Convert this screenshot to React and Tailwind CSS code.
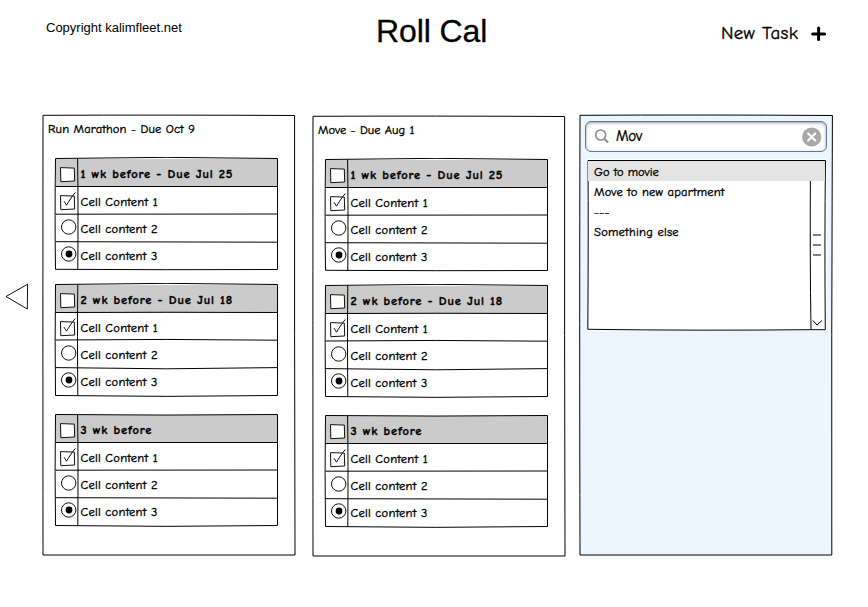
import React from "react";

const comic = "font-['Comic_Sans_MS','Comic_Neue',Inter,sans-serif] whitespace-nowrap [-webkit-text-stroke:0.35px_#000]";

function Frame({ w, h, d, fill = "none" }) {
  return (
    <svg className="pointer-events-none absolute left-0 top-0" width={w} height={h} fill={fill} stroke="#000" strokeWidth="1">
      <path d={d} />
    </svg>
  );
}

function Box({ checked }) {
  return (
    <svg width="21" height="27" fill="none" stroke="#111" strokeWidth="1">
      <path d="M4.5 8.6 18.3 9.1 18.7 22 4.8 22.7Z" fill="#fff" />
      {checked && <path d="M8 14.2c1 1 1.7 3 2.5 4C12.5 15 16 9 19.4 5.4" />}
    </svg>
  );
}

function Radio({ on }) {
  return (
    <svg width="21" height="27" fill="none" stroke="#111" strokeWidth="1">
      <ellipse cx="12.7" cy="13" rx="7.2" ry="7.2" />
      {on && <circle cx="13" cy="13" r="3.4" fill="#000" stroke="none" />}
    </svg>
  );
}

const FRAMES = [
  "M1.5 1.5Q112 -.8 223.5 1.5V112.5Q112 113 1.5 112.3Q.7 60 1.5 1.5M1.5 29.5H223.5M1.5 57.2L223.5 57M1.5 84.7L223.5 85.2M23.6 1.5Q24.3 50 23.8 112.5",
  "M1.5 1.5Q112 -.8 223.5 1.5V112.5Q112 114.2 1.5 112.5Q.8 60 1.5 1.5M1.5 29.5Q112 29 223.5 29.5M1.5 57Q112 55.8 223.5 57.2M1.5 84.6Q112 87 223.5 84.6M23.8 1.5Q23.2 50 23.8 112.5",
  "M1.5 1.5Q112 2.6 223.5 1.5V112.5Q112 114.2 1.5 112.5Q.7 60 1.5 1.5M1.5 29.5H223.5M1.5 57.2L223.5 57M1.5 84.7L223.5 85.2M23.6 1.5Q24.3 50 23.8 112.5",
];

function Table({ title, frame }) {
  const cell = `${comic} pl-[3.5px] text-[12.5px] leading-[27px]`;
  return (
    <section className="relative h-[114px] w-[225px] pl-[2px] pt-[2px]">
      <div className="flex h-[28px] w-[221px] bg-[#cbcbcb]">
        <Box />
        <span className={`${cell} pt-[1.5px] font-bold tracking-[0.83px]`}>{title}</span>
      </div>
      <div className="flex h-[27px]">
        <Box checked />
        <span className={`${cell} pt-[1.5px] tracking-[0.25px]`}>Cell Content 1</span>
      </div>
      <div className="flex h-[27px]">
        <Radio />
        <span className={`${cell} pt-[1.5px] tracking-[0.25px]`}>Cell content 2</span>
      </div>
      <div className="flex h-[27px]">
        <Radio on />
        <span className={`${cell} pt-[1.5px] tracking-[0.25px]`}>Cell content 3</span>
      </div>
      <Frame w="225" h="115" d={FRAMES[frame]} />
    </section>
  );
}

function Card({ title, track }) {
  return (
    <article className="relative h-[443px] w-[254px] pl-[12px]">
      <Frame w="254" h="443" d="M1 1.3Q120 .8 252.6 1.5Q252.4 220 253 441H1Q.8 200 1 1.3Z" />
      <h2 className={`${comic} ${track} -ml-[6px] h-[43px] pt-[6px] text-[12.5px] leading-[18px]`}>{title}</h2>
      <Table title="1 wk before - Due Jul 25" frame={0} />
      <div className="h-[12px]" />
      <Table title="2 wk before - Due Jul 18" frame={1} />
      <div className="h-[16px]" />
      <Table title="3 wk before" frame={2} />
    </article>
  );
}

function SearchPanel() {
  const item = `${comic} h-5 pl-[6px] text-[12.5px] leading-[22px]`;
  return (
    <aside className="relative h-[443px] w-[255px] pl-[6px] pt-[7px]">
      <Frame w="255" h="443" fill="#edf5ff" d="M1 1.3Q120 .6 253.4 1.5Q252.4 220 252.8 441H1Q.4 200 1 1.3Z" />
      <div className="relative flex h-[31px] w-[242px] items-center rounded-[6px] border border-[#60799a] bg-white pl-[8px] pr-[4px] shadow-[inset_0_1px_3px_#999]">
        <svg className="-mt-px" width="16" height="16" fill="none" stroke="#8c9196" strokeWidth="1.7">
          <circle cx="6.7" cy="7" r="5" />
          <path d="M10.3 10.7 14 14.6" strokeWidth="2.2" />
        </svg>
        <span className={`${comic} flex-1 pb-[2px] pl-[6px] text-[15px] leading-5 tracking-[-0.2px]`}>Mov</span>
        <svg width="20" height="20">
          <circle cx="9.7" cy="10" r="9.6" fill="#a8a8a8" />
          <path d="M6.2 6.5 13.2 13.5M13.2 6.5 6.2 13.5" stroke="#fff" strokeWidth="2.2" strokeLinecap="round" />
        </svg>
      </div>
      <div className="relative ml-[2px] mt-[7px] h-[172px] w-[240px] bg-white pt-[2px]">
        <Frame w="240" h="172" d="M1 1.5H238.5Q237.5 80 238.3 170.7L224 170.7Q222.8 100 223.5 1.5M224 170.7Q110 171.8 .8 170.3Q1.5 80 1 1.5M226 161.5l4 4.5 5-4.5" />
        <div className={`${item} relative ml-[1px] mr-[2px] bg-[#e4e4e4] tracking-[0px]`}>Go to movie</div>
        <div className={`${item} ml-[1px] tracking-[0.2px]`}>Move to new apartment</div>
        <div className={`${item} ml-[1px] tracking-[0.2px]`}>---</div>
        <div className={`${item} ml-[1px] tracking-[0.25px]`}>Something else</div>
        <svg className="absolute left-[226px] top-[74px]" width="9" height="24" stroke="#808080" strokeWidth="2">
          <path d="M0 2H8M0 12H8M0 22H8" />
        </svg>
      </div>
    </aside>
  );
}

export default function App() {
  return (
    <main className="h-[607px] w-[868px] overflow-hidden bg-white text-black">
      <header className="flex h-[114px] font-['Liberation_Sans',Arial,sans-serif]">
        <p className="w-[331px] pl-[46px] pt-[18px] text-[13px] leading-5">Copyright kalimfleet.net</p>
        <h1 className="w-[390px] whitespace-nowrap pl-[45px] pt-[12px] text-[32px] leading-[38px] tracking-[-0.1px] [-webkit-text-stroke:0.3px_#000]">Roll Cal</h1>
        <div className="flex pt-[22px]">
          <span className={`${comic} w-[90px] text-[19px] leading-[23px] tracking-[0.3px]`}>New Task</span>
          <svg width="17" height="24" stroke="#000" strokeWidth="3" strokeLinecap="round">
            <path d="M1.7 12H13.6M7.6 6V17.6" />
          </svg>
        </div>
      </header>
      <div className="flex">
        <div className="w-[42px] pl-[5px] pt-[169px]">
          <svg width="24" height="27" fill="none" stroke="#111">
            <path d="M22.7 1.2 1 13.5 22.3 26 22.6 1.2" />
          </svg>
        </div>
        <Card title="Run Marathon - Due Oct 9" track="tracking-[0.15px]" />
        <div className="ml-4 pt-px">
          <Card title="Move - Due Aug 1" track="tracking-[0.05px]" />
        </div>
        <div className="ml-[13px]">
          <SearchPanel />
        </div>
      </div>
    </main>
  );
}
